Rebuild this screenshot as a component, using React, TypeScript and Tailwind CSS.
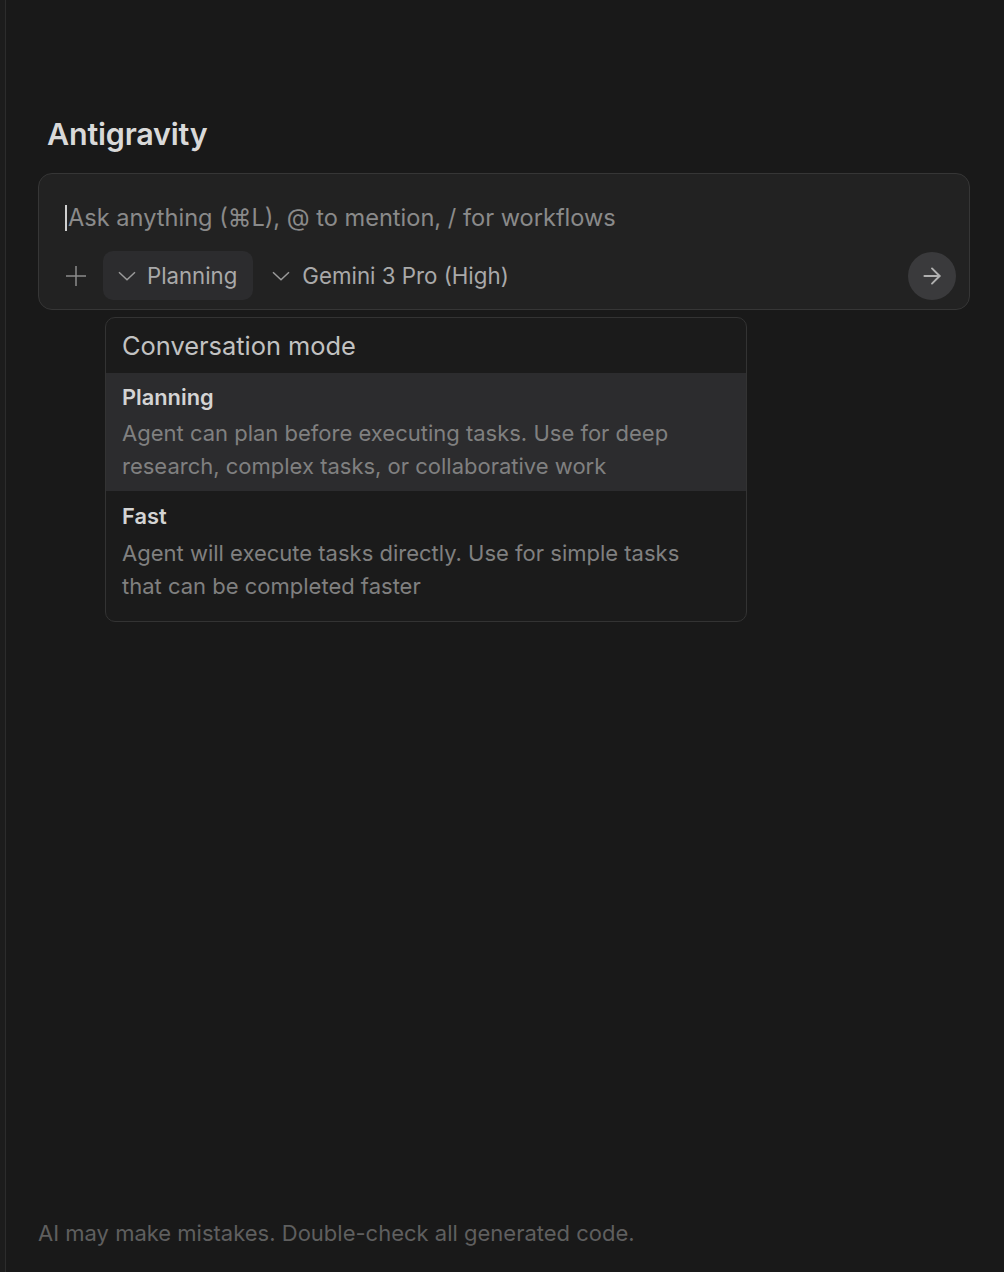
import { ArrowRight } from "lucide-react";

const modes = [
  {
    name: "Planning",
    desc: "Agent can plan before executing tasks. Use for deep research, complex tasks, or collaborative work",
    active: true,
  },
  {
    name: "Fast",
    desc: "Agent will execute tasks directly. Use for simple tasks that can be completed faster",
    active: false,
  },
];

function Chevron() {
  return (
    <svg width="18" height="10" viewBox="0 0 18 10" fill="none" className="shrink-0">
      <polyline points="1,1.2 9,8.8 17,1.2" stroke="#9a9a9a" strokeWidth="1.5" />
    </svg>
  );
}

function PlusIcon() {
  return (
    <svg width="20" height="20" viewBox="0 0 20 20" fill="none">
      <line x1="10" y1="0" x2="10" y2="20" stroke="#8c8c8c" strokeWidth="1.5" />
      <line x1="0" y1="10" x2="20" y2="10" stroke="#8c8c8c" strokeWidth="1.5" />
    </svg>
  );
}

export default function App() {
  return (
    <div
      className="flex h-[1272px] w-full bg-[#191919] text-[#d6d6d6]"
      style={{ fontFamily: "Inter, 'Noto Sans', 'DejaVu Sans', sans-serif" }}
    >
      <div className="w-[6px] shrink-0 border-r border-[#2c2c2c] bg-[#1c1c1c]" />

      <main className="flex min-w-0 flex-1 flex-col pl-[32px] pr-[34px]">
        <h1 className="mt-[115px] pl-[9px] text-[30.5px] font-semibold leading-[38px] tracking-[-0.2px] text-[#d9d9d9]">
          Antigravity
        </h1>

        <div className="mt-[20px] rounded-[14px] border-[1.5px] border-[#363636] bg-[#222222] pb-[9px] pl-[26px] pr-[13px] pt-[28px]">
          <div className="flex h-[32px] items-center text-[23.6px] text-[#8a8a8a]">
            <span className="mr-[1px] h-[26px] w-[2px] bg-[#cfcfcf]" />
            <span>Ask anything (⌘L), @ to mention, / for workflows</span>
          </div>

          <div className="mt-[17px] flex items-center">
            <button className="flex h-[24px] w-[22px] items-center justify-center">
              <PlusIcon />
            </button>
            <button className="ml-[16px] flex h-[49px] items-center gap-[11px] rounded-[10px] bg-[#2c2c2e] pl-[15px] pr-[16px] text-[22.2px] text-[#a9a9a9]">
              <Chevron />
              <span>Planning</span>
            </button>
            <button className="ml-[19px] flex h-[49px] items-center gap-[12px] text-[22.3px] text-[#a9a9a9]">
              <Chevron />
              <span>Gemini 3 Pro (High)</span>
            </button>
            <button className="ml-auto flex h-[48px] w-[48px] items-center justify-center rounded-full bg-[#3a3a3c] text-[#b0b0b0]">
              <ArrowRight className="h-[26px] w-[26px]" strokeWidth={1.8} />
            </button>
          </div>
        </div>

        <div className="ml-[67px] mt-[7px] w-[642px] overflow-hidden rounded-[10px] border-[1.5px] border-[#333333] bg-[#1b1b1b]">
          <div className="flex h-[55px] items-center px-[16px] pt-[2px] text-[25.4px] text-[#c2c2c2]">
            Conversation mode
          </div>
          {modes.map((m) => (
            <div
              key={m.name}
              className={
                m.active
                  ? "bg-[#2c2c2e] px-[16px] pb-[8px] pt-[9px]"
                  : "px-[16px] pb-[18px] pt-[10px]"
              }
            >
              <div className="text-[21.8px] font-semibold leading-[30px] text-[#d4d4d4]">
                {m.name}
              </div>
              <p
                className={
                  m.active
                    ? "mt-[5px] pr-[24px] text-[22px] leading-[33px] text-[#808080]"
                    : "mt-[6px] pr-[24px] text-[22px] leading-[33px] text-[#808080]"
                }
              >
                {m.desc}
              </p>
            </div>
          ))}
        </div>

        <p className="mt-auto mb-[26px] text-[22px] leading-[26px] text-[#5f5f5f]">
          AI may make mistakes. Double-check all generated code.
        </p>
      </main>
    </div>
  );
}
